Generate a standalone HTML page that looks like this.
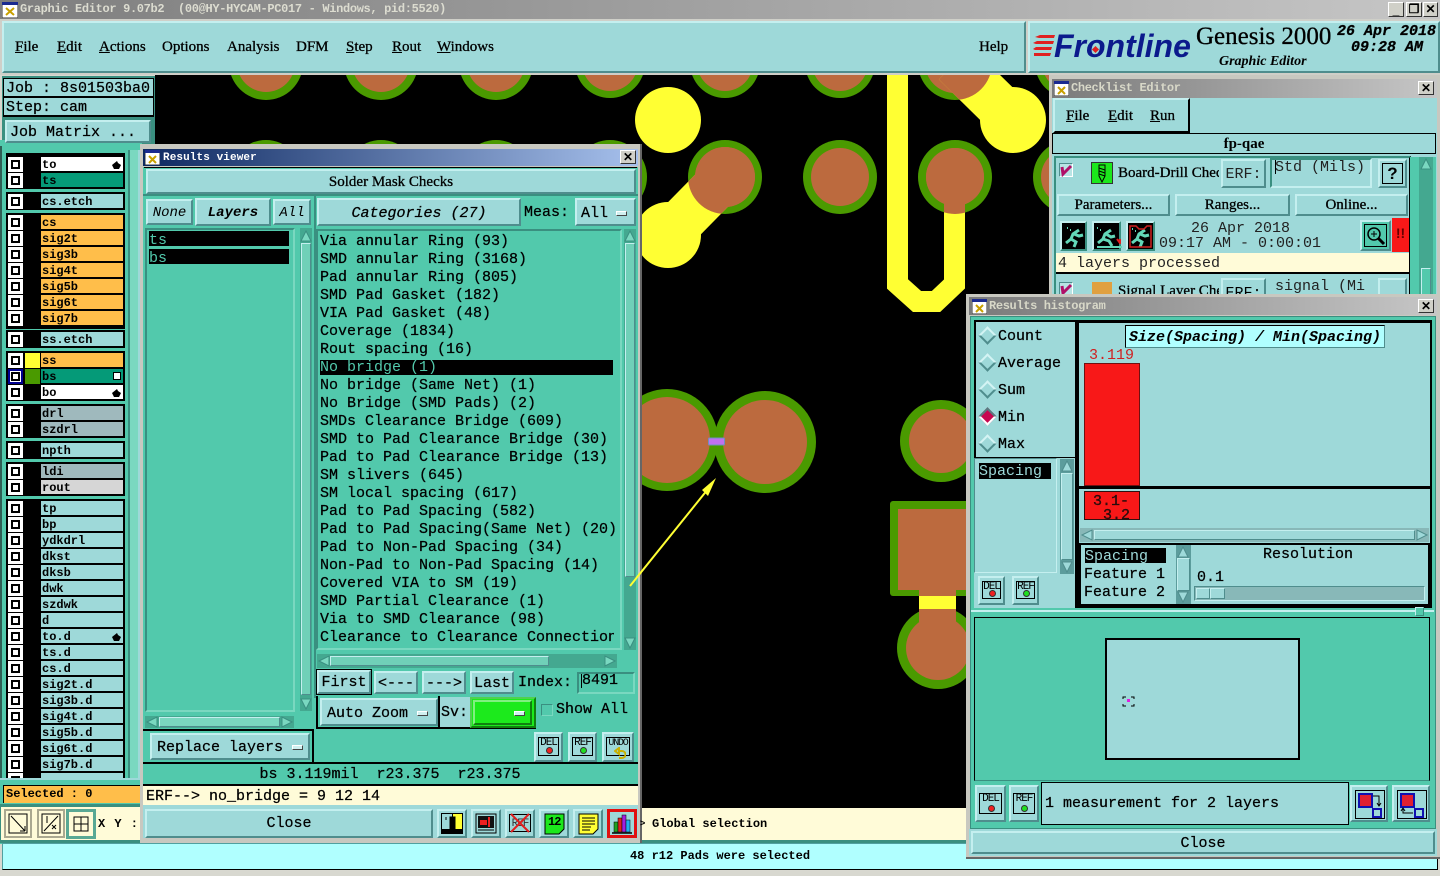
<!DOCTYPE html>
<html><head><meta charset="utf-8"><style>
html,body{margin:0;padding:0;background:#d8d8d0;width:1440px;height:876px;overflow:hidden}
div,span{box-sizing:border-box}
.a{position:absolute}
.m,.s,.l{position:absolute;white-space:pre}
.m{font:15px/18px "Liberation Mono",monospace;color:#000;-webkit-text-stroke:.25px #000;margin-top:2px}
.s{font:15px/18px "Liberation Serif",serif;color:#000;-webkit-text-stroke:.3px #000;margin-top:1px}
.b{position:absolute;background:#9ed9d9;border:2px solid;border-color:#c4efef #4f8d8d #4f8d8d #c4efef;text-align:center;white-space:pre;font:15px/22px "Liberation Mono",monospace;-webkit-text-stroke:.25px #000;padding-top:1px}
.g{position:absolute;background:#52c9ac}
.k{position:absolute;background:#000}
.t{position:absolute;background:#9ed9d9}
.sb{position:absolute;background:#9ed9d9;border:1px solid;border-color:#c4efef #4f8d8d #4f8d8d #c4efef}
.tr{position:absolute;background:#44a890}
.ttl{position:absolute;font:bold 12px/14px "Liberation Mono",monospace;white-space:pre;letter-spacing:-.25px}
.cb{position:absolute;left:8px;width:15px;height:15px;background:#fff}
.cb:after{content:"";box-sizing:border-box;position:absolute;left:3px;top:3px;width:9px;height:9px;border:2px solid #000;background:#fff}
.ly{position:absolute;left:41px;width:82px;height:14px;background:#9ed9d9;font:bold 12px/16px "Liberation Mono",monospace;color:#000;padding-left:1px;white-space:pre;overflow:hidden}
.o{background:#ffbe4a}.w{background:#fff}.e{background:#059a78}.h{background:#9fb9bd}.c{background:#d6d6d6}
.x{position:absolute;width:16px;height:14px;background:#d0d0c8;border:1px solid;border-color:#fff #333 #333 #fff;font:bold 12px/12px "Liberation Sans",sans-serif;text-align:center}
.ic{position:absolute;background:#9ed9d9;border:2px solid;border-color:#c4efef #4f8d8d #4f8d8d #c4efef}
.dl{position:absolute;left:2px;top:3px;right:2px;bottom:4px;border:1px solid #000;font:11px/11px "Liberation Mono",monospace;text-align:center;color:#000;letter-spacing:-1px;white-space:pre}
.dot{position:absolute;width:7px;height:7px;border-radius:50%;border:1px solid #333;left:50%;margin-left:-3px;bottom:1px}
.d{position:absolute;left:981px;width:13px;height:13px;transform:rotate(45deg);border:2px solid;border-color:#d4f4f4 #4f8d8d #4f8d8d #d4f4f4;background:#9ed9d9}
</style></head><body>

<!-- PCB canvas -->
<div class="k" style="left:155px;top:75px;width:900px;height:770px"></div>
<svg class="a" style="left:0;top:0" width="1440" height="876" viewBox="0 0 1440 876">
<defs>
<clipPath id="p1"><circle cx="725" cy="177" r="37"/></clipPath>
<clipPath id="p2"><circle cx="955" cy="177" r="37"/></clipPath>
<clipPath id="p3"><circle cx="955" cy="63" r="37"/></clipPath>
<clipPath id="cv"><rect x="155" y="75" width="900" height="770"/></clipPath>
</defs>
<g clip-path="url(#cv)">
<g fill="#4a9a00">
<circle cx="266" cy="63" r="37"/><circle cx="381" cy="63" r="37"/><circle cx="496" cy="63" r="37"/><circle cx="610" cy="63" r="35"/>
<circle cx="725" cy="63" r="35"/><circle cx="840" cy="63" r="35"/><circle cx="955" cy="63" r="37"/><circle cx="1070" cy="63" r="35"/>
<circle cx="266" cy="177" r="37"/><circle cx="381" cy="177" r="37"/><circle cx="496" cy="177" r="37"/><circle cx="610" cy="177" r="37"/>
<circle cx="725" cy="177" r="37"/><circle cx="840" cy="177" r="37"/><circle cx="955" cy="177" r="37"/><circle cx="1070" cy="177" r="37"/>
<circle cx="667" cy="440" r="51"/><circle cx="765" cy="442" r="51"/><circle cx="941" cy="441" r="41"/><circle cx="938" cy="648" r="41"/>
</g>
<g fill="#bc6a3e">
<circle cx="266" cy="63" r="29"/><circle cx="381" cy="63" r="29"/><circle cx="496" cy="63" r="29"/><circle cx="610" cy="63" r="28"/>
<circle cx="725" cy="63" r="28"/><circle cx="840" cy="63" r="28"/><circle cx="955" cy="63" r="30"/><circle cx="1070" cy="63" r="28"/>
<circle cx="725" cy="177" r="30"/><circle cx="840" cy="177" r="29"/><circle cx="955" cy="177" r="29"/><circle cx="1070" cy="177" r="29"/>
<circle cx="667" cy="440" r="43"/><circle cx="765" cy="442" r="42"/><circle cx="941" cy="441" r="32"/><circle cx="938" cy="648" r="32"/>
</g>
<g fill="#ffff33">
<circle cx="668" cy="120" r="33"/><circle cx="1013" cy="120" r="33"/><circle cx="668" cy="235" r="33"/>
<rect x="919" y="596" width="37" height="14"/>
</g>
<path d="M725 177L668 235" stroke="#ffff33" stroke-width="46" fill="none"/>
<path d="M955 63L1013 120" stroke="#ffff33" stroke-width="46" fill="none"/>
<path d="M725 177L668 235" stroke="#bc6a3e" stroke-width="46" fill="none" clip-path="url(#p1)"/>
<path d="M955 63L1013 120" stroke="#bc6a3e" stroke-width="46" fill="none" clip-path="url(#p3)"/>
<path d="M897.5 70V284L917 301.5H936L954.5 284V177" stroke="#ffff33" stroke-width="21" fill="none"/>
<path d="M954.5 177V220" stroke="#bc6a3e" stroke-width="21" fill="none" clip-path="url(#p2)"/>
<circle cx="955" cy="177" r="29" fill="#bc6a3e"/>
<circle cx="725" cy="177" r="30" fill="#bc6a3e"/>
<rect x="890" y="501" width="90" height="95" rx="3" fill="#4a9a00"/>
<rect x="898" y="509" width="80" height="81" fill="#bc6a3e"/>
<rect x="919" y="590" width="37" height="6" fill="#bc6a3e"/>
<rect x="919" y="596" width="37" height="13" fill="#ffff33"/>
<rect x="919" y="609" width="37" height="15" fill="#bc6a3e"/>
<rect x="708.5" y="438" width="16" height="7" rx="1" fill="#c070f0" stroke="#6f90c0"/>
</g>
</svg>

<!-- Title bar -->
<div class="a" style="left:0;top:0;width:1440px;height:19px;background:linear-gradient(90deg,#7e7e7e,#c6c6c6)"></div>
<svg class="a" style="left:2px;top:2px" width="16" height="16"><rect width="16" height="16" fill="#fff" stroke="#333"/><rect x="0" y="0" width="16" height="3" fill="#1a2a90"/><path d="M4 6l8 7M12 6l-8 7" stroke="#c8a000" stroke-width="2"/></svg>
<div class="ttl" style="left:20px;top:2px;color:#dcdcd0;font-size:12px;letter-spacing:-.33px">Graphic Editor 9.07b2  (00@HY-HYCAM-PC017 - Windows, pid:5520)</div>
<div class="x" style="left:1388px;top:2px;width:16px;height:15px;line-height:14px">_</div>
<div class="x" style="left:1406px;top:2px;width:16px;height:15px;line-height:13px;font-size:12px">&#10064;</div>
<div class="x" style="left:1423px;top:2px;width:15px;height:15px;line-height:13px">&#10005;</div>

<!-- Menu bar -->
<div class="a" style="left:0;top:19px;width:1440px;height:56px;background:#cfcfc8"></div>
<div class="t" style="left:2px;top:21px;width:1024px;height:52px;border:2px solid;border-color:#c4efef #4f8d8d #4f8d8d #c4efef"></div>
<div class="s" style="left:15px;top:37px"><u>F</u>ile</div>
<div class="s" style="left:57px;top:37px"><u>E</u>dit</div>
<div class="s" style="left:99px;top:37px"><u>A</u>ctions</div>
<div class="s" style="left:162px;top:37px">Options</div>
<div class="s" style="left:227px;top:37px">Analysis</div>
<div class="s" style="left:296px;top:37px">DFM</div>
<div class="s" style="left:346px;top:37px"><u>S</u>tep</div>
<div class="s" style="left:392px;top:37px"><u>R</u>out</div>
<div class="s" style="left:437px;top:37px"><u>W</u>indows</div>
<div class="s" style="left:979px;top:37px">Help</div>

<!-- Frontline panel -->
<div class="t" style="left:1028px;top:21px;width:412px;height:52px;border:2px solid;border-color:#c4efef #4f8d8d #4f8d8d #c4efef"></div>
<svg class="a" style="left:1033px;top:34px" width="24" height="24"><g fill="#e02020"><path d="M7 1h15l-1 3H6l-4-1zM4 7h17l-1 3H3l-3-1zM3 13h16l-1 3H2l-2-1zM1 19h17l-1 3H1z"/></g></svg>
<div class="a" style="left:1054px;top:27px;font:italic bold 32px/38px 'Liberation Sans',sans-serif;color:#0b1a8c;white-space:pre">Frontline</div>
<div class="a" style="left:1093px;top:47px;width:5px;height:5px;background:#e02020;transform:rotate(45deg)"></div>
<div class="s" style="left:1196px;top:20px;font-size:25px;line-height:32px">Genesis 2000</div>
<div class="s" style="left:1219px;top:52px;font:italic bold 14px/18px 'Liberation Serif',serif;-webkit-text-stroke:0">Graphic Editor</div>
<div class="m" style="left:1337px;top:21px;font:italic bold 15px/18px 'Liberation Mono',monospace;letter-spacing:0">26 Apr 2018</div>
<div class="m" style="left:1351px;top:37px;font:italic bold 15px/18px 'Liberation Mono',monospace">09:28 AM</div>

<!-- Left panel -->
<div class="a" style="left:2px;top:76px;width:153px;height:70px;background:#3a8f80"></div>
<div class="a" style="left:0;top:140px;width:142px;height:704px;background:#52c9ac"></div>
<div class="a" style="left:0;top:146px;width:2px;height:632px;background:#2f5f55"></div>
<div class="k" style="left:3px;top:78px;width:151px;height:39px"></div>
<div class="t" style="left:4px;top:79px;width:149px;height:17px"></div>
<div class="t" style="left:4px;top:98px;width:149px;height:17px"></div>
<div class="m" style="left:6px;top:78px">Job : 8s01503ba0</div>
<div class="m" style="left:6px;top:97px">Step: cam</div>
<div class="b" style="left:5px;top:120px;width:146px;height:23px;text-align:left;padding-left:3px;line-height:20px">Job Matrix ...</div>

<div class="a" style="left:128px;top:150px;width:12px;height:635px;background:#7ad8c0;border-left:2px solid #3a8f80;border-right:2px solid #9ed9d9"></div>
<div class="k" style="left:6px;top:153px;width:119px;height:36px"></div>
<div class="k" style="left:6px;top:192px;width:119px;height:18px"></div>
<div class="k" style="left:6px;top:213px;width:119px;height:116px"></div>
<div class="k" style="left:6px;top:330px;width:119px;height:18px"></div>
<div class="k" style="left:6px;top:351px;width:119px;height:50px"></div>
<div class="k" style="left:6px;top:404px;width:119px;height:34px"></div>
<div class="k" style="left:6px;top:441px;width:119px;height:18px"></div>
<div class="k" style="left:6px;top:462px;width:119px;height:34px"></div>
<div class="k" style="left:6px;top:499px;width:119px;height:279px"></div>

<div class="cb" style="top:157px"></div><div class="ly w" style="top:157px">to<svg class="a" style="right:2px;top:3px" width="9" height="9"><path d="M0 5L5 1 6 3 9 5 7 9H2z"/></svg></div>
<div class="cb" style="top:173px"></div><div class="ly e" style="top:173px">ts</div>
<div class="cb" style="top:194px"></div><div class="ly" style="top:194px">cs.etch</div>
<div class="cb" style="top:215px"></div><div class="ly o" style="top:215px">cs</div>
<div class="cb" style="top:231px"></div><div class="ly o" style="top:231px">sig2t</div>
<div class="cb" style="top:247px"></div><div class="ly o" style="top:247px">sig3b</div>
<div class="cb" style="top:263px"></div><div class="ly o" style="top:263px">sig4t</div>
<div class="cb" style="top:279px"></div><div class="ly o" style="top:279px">sig5b</div>
<div class="cb" style="top:295px"></div><div class="ly o" style="top:295px">sig6t</div>
<div class="cb" style="top:311px"></div><div class="ly o" style="top:311px">sig7b</div>
<div class="cb" style="top:332px"></div><div class="ly" style="top:332px">ss.etch</div>
<div class="cb" style="top:353px"></div><div class="a" style="left:25px;top:353px;width:15px;height:15px;background:#ffff33"></div><div class="ly o" style="top:353px">ss</div>
<div class="cb" style="top:369px;outline:2px solid #000090;outline-offset:-2px"></div><div class="a" style="left:25px;top:369px;width:15px;height:15px;background:#4a9a00"></div><div class="ly e" style="top:369px">bs<span class="a" style="right:2px;top:3px;width:8px;height:8px;border:1px solid #000;background:#fff"></span></div>
<div class="cb" style="top:385px"></div><div class="ly w" style="top:385px">bo<svg class="a" style="right:2px;top:3px" width="9" height="9"><path d="M0 5L5 1 6 3 9 5 7 9H2z"/></svg></div>
<div class="cb" style="top:406px"></div><div class="ly h" style="top:406px">drl</div>
<div class="cb" style="top:422px"></div><div class="ly h" style="top:422px">szdrl</div>
<div class="cb" style="top:443px"></div><div class="ly" style="top:443px">npth</div>
<div class="cb" style="top:464px"></div><div class="ly h" style="top:464px">ldi</div>
<div class="cb" style="top:480px"></div><div class="ly c" style="top:480px">rout</div>
<div class="cb" style="top:501px"></div><div class="ly" style="top:501px">tp</div>
<div class="cb" style="top:517px"></div><div class="ly" style="top:517px">bp</div>
<div class="cb" style="top:533px"></div><div class="ly" style="top:533px">ydkdrl</div>
<div class="cb" style="top:549px"></div><div class="ly" style="top:549px">dkst</div>
<div class="cb" style="top:565px"></div><div class="ly" style="top:565px">dksb</div>
<div class="cb" style="top:581px"></div><div class="ly" style="top:581px">dwk</div>
<div class="cb" style="top:597px"></div><div class="ly" style="top:597px">szdwk</div>
<div class="cb" style="top:613px"></div><div class="ly" style="top:613px">d</div>
<div class="cb" style="top:629px"></div><div class="ly" style="top:629px">to.d<svg class="a" style="right:2px;top:3px" width="9" height="9"><path d="M0 5L5 1 6 3 9 5 7 9H2z"/></svg></div>
<div class="cb" style="top:645px"></div><div class="ly" style="top:645px">ts.d</div>
<div class="cb" style="top:661px"></div><div class="ly" style="top:661px">cs.d</div>
<div class="cb" style="top:677px"></div><div class="ly" style="top:677px">sig2t.d</div>
<div class="cb" style="top:693px"></div><div class="ly" style="top:693px">sig3b.d</div>
<div class="cb" style="top:709px"></div><div class="ly" style="top:709px">sig4t.d</div>
<div class="cb" style="top:725px"></div><div class="ly" style="top:725px">sig5b.d</div>
<div class="cb" style="top:741px"></div><div class="ly" style="top:741px">sig6t.d</div>
<div class="cb" style="top:757px"></div><div class="ly" style="top:757px">sig7b.d</div>
<div class="cb" style="top:773px;height:5px;overflow:hidden"></div><div class="ly" style="top:773px;height:5px"></div>

<div class="a" style="left:0;top:778px;width:142px;height:7px;background:#52c9ac;border-top:2px solid #9ed9d9"></div>
<div class="a" style="left:3px;top:785px;width:137px;height:18px;background:#ffbe4a;border-top:1px solid #000;border-left:1px solid #000;font:bold 12px/17px 'Liberation Mono',monospace;padding-left:2px;white-space:pre">Selected : 0</div>
<div class="a" style="left:0;top:804px;width:140px;height:38px;background:#3a8f80"></div>
<div class="a" style="left:1px;top:807px;width:139px;height:33px;background:#fffbd8"></div>
<svg class="a" style="left:4px;top:809px" width="92" height="30">
<rect x="1" y="1" width="26" height="27" fill="#fffbd8" stroke="#aaa890" stroke-width="2"/><rect x="5" y="5" width="18" height="19" fill="none" stroke="#000"/><path d="M7 7l14 15M21 22v-5M21 22h-5" stroke="#000" fill="none"/>
<rect x="34" y="1" width="26" height="27" fill="#fffbd8" stroke="#aaa890" stroke-width="2"/><rect x="38" y="5" width="18" height="19" fill="none" stroke="#000"/><path d="M40 22l14-15M43 7v7M48 20l4-4M48 16l4 4" stroke="#000" fill="none"/>
<rect x="62" y="0" width="30" height="30" fill="#59a894"/><rect x="65" y="3" width="24" height="24" fill="#fffbd8"/><rect x="70" y="8" width="14" height="14" fill="none" stroke="#000"/><path d="M70 15h14M77 8v14" stroke="#000"/>
</svg>
<div class="a" style="left:98px;top:816px;font:bold 12px/16px 'Liberation Mono',monospace;white-space:pre;letter-spacing:1px">X Y :</div>

<!-- Canvas info -->
<div class="a" style="left:640px;top:808px;width:326px;height:32px;background:#fffbd8"></div>
<div class="a" style="left:652px;top:816px;font:bold 12px/16px 'Liberation Mono',monospace;white-space:pre">Global selection</div>

<!-- Status bar -->
<div class="a" style="left:0;top:840px;width:1440px;height:3px;background:#3a8f80"></div>
<div class="a" style="left:2px;top:843px;width:1436px;height:27px;background:#b0ffff;border:1px solid;border-color:#50a0a0 #000 #000 #50a0a0;font:bold 12px/25px 'Liberation Mono',monospace;text-align:center">48 r12 Pads were selected</div>

<!-- Results viewer -->
<div class="a" style="left:140px;top:144px;width:502px;height:699px;background:#c8c8c0;border-right:2px solid #666"></div>
<div class="a" style="left:143px;top:149px;width:495px;height:17px;background:linear-gradient(90deg,#0d2860,#a6c0ec)"></div>
<svg class="a" style="left:145px;top:150px" width="15" height="15"><rect width="15" height="15" fill="#fff" stroke="#333"/><rect width="15" height="3" fill="#1a2a90"/><path d="M4 6l7 7M11 6l-7 7" stroke="#c8a000" stroke-width="2"/></svg>
<div class="ttl" style="left:163px;top:151px;color:#fff;font-size:11px;letter-spacing:.1px">Results viewer</div>
<div class="x" style="left:620px;top:150px">&#10005;</div>
<div class="g" style="left:143px;top:167px;width:495px;height:671px"></div>
<div class="k" style="left:144px;top:167px;width:493px;height:1px"></div>
<div class="b" style="left:146px;top:169px;width:490px;height:25px;font:15px/21px 'Liberation Serif',serif;-webkit-text-stroke:.3px #000">Solder Mask Checks</div>
<div class="a" style="left:143px;top:194px;width:495px;height:2px;background:#3a8f80"></div>

<!-- layers col -->
<div class="b" style="left:146px;top:199px;width:47px;height:26px;font:italic 14px/22px 'Liberation Mono',monospace;-webkit-text-stroke:0">None</div>
<div class="b" style="left:195px;top:198px;width:76px;height:28px;font:italic bold 14px/24px 'Liberation Mono',monospace;-webkit-text-stroke:0">Layers</div>
<div class="b" style="left:273px;top:199px;width:38px;height:26px;font:italic 14px/22px 'Liberation Mono',monospace;-webkit-text-stroke:0">All</div>
<div class="g" style="left:145px;top:228px;width:150px;height:484px;border:2px solid;border-color:#3a8f80 #7ad8c0 #7ad8c0 #3a8f80"></div>
<div class="k" style="left:149px;top:231px;width:140px;height:15px"></div>
<div class="k" style="left:149px;top:249px;width:140px;height:15px"></div>
<div class="m" style="left:149px;top:230px;color:#52c9ac;-webkit-text-stroke:0">ts</div>
<div class="m" style="left:149px;top:248px;color:#52c9ac;-webkit-text-stroke:0">bs</div>
<div class="tr" style="left:300px;top:228px;width:12px;height:483px"></div>
<div class="sb" style="left:301px;top:243px;width:10px;height:452px;background:#70d0b8"></div>
<svg class="a" style="left:300px;top:229px" width="12" height="482"><path d="M6 2L11 12H1z" fill="#7ad8c0" stroke="#3a8f80"/><path d="M6 480L11 470H1z" fill="#7ad8c0" stroke="#3a8f80"/></svg>
<div class="tr" style="left:145px;top:716px;width:149px;height:12px"></div>
<div class="sb" style="left:159px;top:717px;width:121px;height:10px;background:#7ad8c0"></div>
<svg class="a" style="left:145px;top:716px" width="149" height="12"><path d="M2 6L12 1V11z" fill="#7ad8c0" stroke="#3a8f80"/><path d="M147 6L137 1V11z" fill="#7ad8c0" stroke="#3a8f80"/></svg>
<div class="k" style="left:143px;top:729px;width:171px;height:2px"></div>
<div class="k" style="left:312px;top:729px;width:2px;height:34px"></div>
<div class="b" style="left:150px;top:733px;width:160px;height:27px;text-align:left;padding-left:5px;line-height:23px">Replace layers</div>
<div class="a" style="left:292px;top:745px;width:11px;height:5px;background:#d0f0f0;border:1px solid;border-color:#fff #444 #444 #fff"></div>
<div class="k" style="left:314px;top:195px;width:2px;height:503px;background:#3a8f80"></div>

<!-- categories -->
<div class="b" style="left:317px;top:198px;width:204px;height:28px;font:italic 15px/25px 'Liberation Mono',monospace">Categories (27)</div>
<div class="m" style="left:524px;top:202px">Meas:</div>
<div class="b" style="left:575px;top:198px;width:61px;height:28px;text-align:left;padding-left:4px;line-height:25px">All</div>
<div class="a" style="left:616px;top:211px;width:11px;height:5px;background:#d0f0f0;border:1px solid;border-color:#fff #444 #444 #fff"></div>
<div class="g" style="left:316px;top:229px;width:306px;height:421px;border:2px solid;border-color:#3a8f80 #7ad8c0 #7ad8c0 #3a8f80"></div>
<div class="k" style="left:320px;top:360px;width:293px;height:15px"></div>
<div class="m" style="left:320px;top:231px">Via annular Ring (93)</div>
<div class="m" style="left:320px;top:249px">SMD annular Ring (3168)</div>
<div class="m" style="left:320px;top:267px">Pad annular Ring (805)</div>
<div class="m" style="left:320px;top:285px">SMD Pad Gasket (182)</div>
<div class="m" style="left:320px;top:303px">VIA Pad Gasket (48)</div>
<div class="m" style="left:320px;top:321px">Coverage (1834)</div>
<div class="m" style="left:320px;top:339px">Rout spacing (16)</div>
<div class="m" style="left:320px;top:357px;color:#52c9ac;-webkit-text-stroke:0">No bridge (1)</div>
<div class="m" style="left:320px;top:375px">No bridge (Same Net) (1)</div>
<div class="m" style="left:320px;top:393px">No Bridge (SMD Pads) (2)</div>
<div class="m" style="left:320px;top:411px">SMDs Clearance Bridge (609)</div>
<div class="m" style="left:320px;top:429px">SMD to Pad Clearance Bridge (30)</div>
<div class="m" style="left:320px;top:447px">Pad to Pad Clearance Bridge (13)</div>
<div class="m" style="left:320px;top:465px">SM slivers (645)</div>
<div class="m" style="left:320px;top:483px">SM local spacing (617)</div>
<div class="m" style="left:320px;top:501px">Pad to Pad Spacing (582)</div>
<div class="m" style="left:320px;top:519px;width:295px;overflow:hidden">Pad to Pad Spacing(Same Net) (20)</div>
<div class="m" style="left:320px;top:537px">Pad to Non-Pad Spacing (34)</div>
<div class="m" style="left:320px;top:555px">Non-Pad to Non-Pad Spacing (14)</div>
<div class="m" style="left:320px;top:573px">Covered VIA to SM (19)</div>
<div class="m" style="left:320px;top:591px">SMD Partial Clearance (1)</div>
<div class="m" style="left:320px;top:609px">Via to SMD Clearance (98)</div>
<div class="m" style="width:294px;overflow:hidden;left:320px;top:627px">Clearance to Clearance Connection</div>
<div class="tr" style="left:624px;top:229px;width:12px;height:421px"></div>
<div class="sb" style="left:625px;top:243px;width:10px;height:334px;background:#70d0b8"></div>
<svg class="a" style="left:624px;top:229px" width="12" height="421"><path d="M6 2L11 12H1z" fill="#7ad8c0" stroke="#3a8f80"/><path d="M6 419L11 409H1z" fill="#7ad8c0" stroke="#3a8f80"/></svg>
<div class="tr" style="left:317px;top:654px;width:300px;height:14px"></div>
<div class="sb" style="left:330px;top:656px;width:219px;height:10px;background:#70d0b8"></div>
<svg class="a" style="left:317px;top:654px" width="300" height="14"><path d="M2 7L12 2V12z" fill="#7ad8c0" stroke="#3a8f80"/><path d="M298 7L288 2V12z" fill="#7ad8c0" stroke="#3a8f80"/></svg>
<div class="k" style="left:316px;top:669px;width:56px;height:26px"></div>
<div class="b" style="left:317px;top:670px;width:54px;height:24px;line-height:20px">First</div>
<div class="b" style="left:374px;top:671px;width:44px;height:23px;line-height:19px">&lt;---</div>
<div class="b" style="left:422px;top:671px;width:44px;height:23px;line-height:19px">---&gt;</div>
<div class="b" style="left:470px;top:671px;width:44px;height:23px;line-height:19px">Last</div>
<div class="m" style="left:518px;top:672px">Index:</div>
<div class="a" style="left:577px;top:672px;width:58px;height:22px;background:#52c9ac;border:2px solid;border-color:#3a8f80 #7ad8c0 #7ad8c0 #3a8f80"></div>
<div class="m" style="left:582px;top:670px">8491</div>
<div class="k" style="left:581px;top:674px;width:1px;height:14px"></div>
<div class="k" style="left:316px;top:696px;width:2px;height:32px"></div>
<div class="k" style="left:316px;top:727px;width:220px;height:2px"></div>
<div class="b" style="left:320px;top:698px;width:118px;height:28px;text-align:left;padding-left:5px;line-height:25px">Auto Zoom</div>
<div class="a" style="left:417px;top:711px;width:11px;height:5px;background:#d0f0f0;border:1px solid;border-color:#fff #444 #444 #fff"></div>
<div class="k" style="left:438px;top:696px;width:2px;height:32px"></div>
<div class="t" style="left:440px;top:697px;width:30px;height:30px"></div>
<div class="m" style="left:441px;top:702px">Sv:</div>
<div class="a" style="left:470px;top:697px;width:66px;height:31px;background:#1cea1c;border:2px solid;border-color:#50d050 #108010 #108010 #50d050"></div>
<div class="a" style="left:473px;top:700px;width:59px;height:25px;border:2px solid;border-color:#80f080 #108010 #108010 #80f080"></div>
<div class="a" style="left:514px;top:711px;width:11px;height:5px;background:#d0f0f0;border:1px solid;border-color:#fff #444 #444 #fff"></div>
<div class="a" style="left:541px;top:704px;width:12px;height:12px;background:#52c9ac;border:1px solid;border-color:#3a8f80 #7ad8c0 #7ad8c0 #3a8f80"></div>
<div class="m" style="left:556px;top:699px">Show All</div>

<div class="ic" style="left:534px;top:732px;width:29px;height:30px"><div class="dl">DEL<span class="dot" style="background:#f02020"></span></div></div>
<div class="ic" style="left:568px;top:732px;width:29px;height:30px"><div class="dl">REF<span class="dot" style="background:#20e020"></span></div></div>
<div class="ic" style="left:602px;top:732px;width:32px;height:30px"><div class="dl" style="font-size:10px;letter-spacing:-1.2px">UNDO<svg class="a" style="left:7px;top:9px" width="12" height="13"><path d="M1 4l4-3v6zM4 4h4a3 3 0 0 1 0 7H5" fill="none" stroke="#c8b000" stroke-width="2"/></svg></div></div>

<div class="k" style="left:143px;top:762px;width:495px;height:2px"></div>
<div class="m" style="left:144px;width:492px;top:764px;text-align:center">bs 3.119mil  r23.375  r23.375</div>
<div class="k" style="left:143px;top:784px;width:495px;height:2px"></div>
<div class="a" style="left:143px;top:786px;width:495px;height:19px;background:#fffbd8"></div>
<div class="m" style="left:146px;top:786px">ERF--&gt; no_bridge = 9 12 14</div>
<div class="a" style="left:143px;top:805px;width:495px;height:33px;background:#9ed9d9"></div>
<div class="b" style="left:145px;top:809px;width:288px;height:29px;line-height:24px">Close</div>

<!-- tool icons -->
<div class="ic" style="left:437px;top:809px;width:30px;height:29px"><svg class="a" style="left:2px;top:2px" width="22" height="21"><rect width="22" height="21" fill="#000"/><rect x="1" y="1" width="10" height="15" fill="#9ed9d9"/><rect x="12" y="1" width="9" height="15" fill="#ffff33"/><path d="M9 4h5v13H9zM5 4v3" fill="#000" stroke="#000"/></svg></div>
<div class="ic" style="left:471px;top:809px;width:30px;height:29px"><svg class="a" style="left:2px;top:2px" width="22" height="21"><rect x="1" y="1" width="20" height="19" fill="#9ed9d9" stroke="#000"/><rect x="3" y="3" width="16" height="12" fill="#111"/><rect x="5" y="7" width="7" height="5" fill="#f02020"/><path d="M14 4v10" stroke="#f02020" stroke-width="2"/><path d="M3 17h16" stroke="#000"/></svg></div>
<div class="ic" style="left:505px;top:809px;width:30px;height:29px"><div class="dl" style="font-size:11px;line-height:19px;color:#333">REF</div><svg class="a" style="left:2px;top:2px" width="22" height="21"><path d="M2 1L20 19M20 1L2 19" stroke="#e02020" stroke-width="2"/></svg></div>
<div class="ic" style="left:539px;top:809px;width:30px;height:29px"><svg class="a" style="left:3px;top:2px" width="21" height="22"><path d="M1 1H20V16L15 21H1z" fill="#1ce81c" stroke="#000"/></svg><div class="a" style="left:7px;top:5px;font:bold 12px/12px 'Liberation Mono',monospace;letter-spacing:-1px">12</div></div>
<div class="ic" style="left:573px;top:809px;width:30px;height:29px"><svg class="a" style="left:3px;top:2px" width="21" height="22"><path d="M1 1H20V16L15 21H1z" fill="#ffff33" stroke="#000"/><path d="M4 5H17M4 8H17M4 11H17M4 14H13M4 17H12" stroke="#000"/></svg></div>
<div class="a" style="left:607px;top:809px;width:30px;height:29px;background:#9ed9d9;border:3px solid #e01010"><svg class="a" style="left:1px;top:1px" width="22" height="22"><path d="M1 20H21" stroke="#000" stroke-width="1.5"/><rect x="3" y="9" width="4" height="10" fill="#20a020" stroke="#000" stroke-width=".5"/><rect x="7" y="5" width="4" height="14" fill="#e02020" stroke="#000" stroke-width=".5"/><rect x="11" y="2" width="4" height="17" fill="#a020e0" stroke="#000" stroke-width=".5"/><rect x="15" y="7" width="4" height="12" fill="#20b0f0" stroke="#000" stroke-width=".5"/></svg></div>
<div class="a" style="left:640px;top:818px;font:bold 9px/10px 'Liberation Sans',sans-serif">&gt;</div>

<!-- Checklist editor -->
<div class="a" style="left:1049px;top:75px;width:391px;height:225px;background:#c8c8c0"></div>
<div class="a" style="left:1052px;top:79px;width:385px;height:19px;background:linear-gradient(90deg,#7a7a7a,#c6c6c6)"></div>
<svg class="a" style="left:1054px;top:81px" width="15" height="15"><rect width="15" height="15" fill="#fff" stroke="#333"/><rect width="15" height="3" fill="#1a2a90"/><path d="M4 6l7 7M11 6l-7 7" stroke="#c8a000" stroke-width="2"/></svg>
<div class="ttl" style="left:1071px;top:81px;color:#d8d8c8;font-size:12px;letter-spacing:-.35px">Checklist Editor</div>
<div class="x" style="left:1418px;top:81px">&#10005;</div>
<div class="t" style="left:1052px;top:98px;width:385px;height:202px"></div>
<div class="b" style="left:1053px;top:98px;width:137px;height:35px;border-color:#c4efef #000 #000 #c4efef"></div>
<div class="s" style="left:1066px;top:106px"><u>F</u>ile</div>
<div class="s" style="left:1108px;top:106px"><u>E</u>dit</div>
<div class="s" style="left:1150px;top:106px"><u>R</u>un</div>
<div class="a" style="left:1052px;top:133px;width:384px;height:21px;border:1px solid #000;background:#9ed9d9;font:bold 15px/20px 'Liberation Serif',serif;text-align:center">fp-qae</div>
<div class="a" style="left:1054px;top:156px;width:357px;height:144px;border:2px solid;border-color:#3a8f80 #000 #000 #3a8f80"></div>
<div class="g" style="left:1410px;top:157px;width:26px;height:143px"></div>
<div class="tr" style="left:1419px;top:157px;width:14px;height:143px"></div>
<div class="sb" style="left:1421px;top:268px;width:10px;height:32px;background:#52c9ac"></div>
<svg class="a" style="left:1419px;top:157px" width="14" height="14"><path d="M7 2L12 12H2z" fill="#7ad8c0" stroke="#3a8f80"/></svg>
<div class="a" style="left:1059px;top:163px;width:14px;height:14px;background:#b8e4e4;border:1px solid;border-color:#4f8d8d #fff #fff #4f8d8d"></div>
<svg class="a" style="left:1059px;top:163px" width="14" height="14"><path d="M3 4L4 11 12 3" fill="none" stroke="#b01068" stroke-width="3"/></svg>
<svg class="a" style="left:1091px;top:162px" width="22" height="22"><rect x=".5" y=".5" width="21" height="21" fill="#1ce81c" stroke="#333"/><path d="M8 3H14V14L11 20 8 14z" fill="none" stroke="#000"/><path d="M8 6L14 8M8 9L14 11M8 12L14 14" stroke="#000"/></svg>
<div class="s" style="left:1118px;top:163px;width:101px;overflow:hidden">Board-Drill Check</div>
<div class="b" style="left:1221px;top:159px;width:45px;height:29px;line-height:25px;-webkit-text-stroke:0;color:#222">ERF:</div>
<div class="a" style="left:1270px;top:158px;width:102px;height:30px;border:2px solid;border-color:#3a8f80 #c4efef #c4efef #3a8f80"></div>
<div class="m" style="left:1275px;top:157px;-webkit-text-stroke:0;color:#222">Std (Mils)</div>
<div class="k" style="left:1275px;top:160px;width:1px;height:14px"></div>
<div class="b" style="left:1378px;top:159px;width:29px;height:29px;padding:0"><div class="a" style="left:2px;top:2px;width:21px;height:21px;border:1px solid #000;font:bold 17px/19px 'Liberation Sans',sans-serif;-webkit-text-stroke:0;background:#9ed9d9">?</div></div>
<div class="b" style="left:1057px;top:194px;width:113px;height:22px;font:15px/17px 'Liberation Serif',serif;-webkit-text-stroke:.3px #000">Parameters...</div>
<div class="b" style="left:1175px;top:194px;width:115px;height:22px;font:15px/17px 'Liberation Serif',serif;-webkit-text-stroke:.3px #000">Ranges...</div>
<div class="b" style="left:1295px;top:194px;width:113px;height:22px;font:15px/17px 'Liberation Serif',serif;-webkit-text-stroke:.3px #000">Online...</div>
<div class="ic" style="left:1060px;top:221px;width:27px;height:30px;background:#000;border-color:#c4efef #3a8f80 #3a8f80 #c4efef"></div>
<div class="ic" style="left:1092px;top:221px;width:29px;height:30px;background:#000;border-color:#c4efef #3a8f80 #3a8f80 #c4efef"></div>
<div class="ic" style="left:1126px;top:221px;width:29px;height:30px;background:#000;border-color:#c4efef #3a8f80 #3a8f80 #c4efef"></div>
<svg class="a" style="left:1060px;top:221px" width="100" height="30"><g fill="none" stroke="#63d8b8" stroke-width="3"><path d="M19 9l-6 4-2 5 5 3-2 5M14 13l5 2 4-1M11 18l-5 4"/><path d="M51 9l-6 4-2 5 6 2 3 5M46 13l5 3 4-1M43 18l-5 4"/><path d="M85 9l-6 4-2 5 5 3-2 5M80 13l5 2 4-1M77 18l-5 4"/></g><path d="M7 7h1M10 9h1M37 7h1M40 9h1M72 8h1M75 10h1" stroke="#63d8b8" stroke-width="2"/><path d="M70 5H76L79 8H84L87 5H91V26H70z" fill="none" stroke="#d02020" stroke-width="1.5"/><path d="M37 26H62" stroke="#63d8b8" stroke-width="2"/><path d="M57 18l3 4M60 18v5" stroke="#e02020" stroke-width="2"/></svg>
<div class="m" style="left:1191px;top:218px;color:#222;-webkit-text-stroke:0">26 Apr 2018</div>
<div class="m" style="left:1159px;top:233px;color:#222;-webkit-text-stroke:0">09:17 AM - 0:00:01</div>
<div class="ic" style="left:1360px;top:220px;width:31px;height:31px;background:#52c9ac"><svg class="a" style="left:2px;top:2px" width="23" height="23"><rect x=".5" y=".5" width="22" height="22" fill="none" stroke="#000"/><circle cx="10" cy="10" r="6" fill="none" stroke="#000" stroke-width="1.5"/><path d="M7 10h6M10 7v6" stroke="#000"/><path d="M14 14l6 6" stroke="#000" stroke-width="3"/></svg></div>
<div class="a" style="left:1392px;top:218px;width:17px;height:34px;background:#f81818;font:bold 14px/30px 'Liberation Sans',sans-serif;text-align:center;color:#600">!!</div>
<div class="a" style="left:1056px;top:253px;width:353px;height:19px;background:#fffbd8"></div>
<div class="m" style="left:1058px;top:253px;color:#222;-webkit-text-stroke:0">4 layers processed</div>
<div class="k" style="left:1056px;top:272px;width:353px;height:2px"></div>
<div class="a" style="left:1059px;top:282px;width:14px;height:14px;background:#b8e4e4;border:1px solid;border-color:#4f8d8d #fff #fff #4f8d8d"></div>
<svg class="a" style="left:1059px;top:282px" width="14" height="14"><path d="M3 4L4 11 12 3" fill="none" stroke="#b01068" stroke-width="3"/></svg>
<div class="a" style="left:1092px;top:282px;width:20px;height:14px;background:#e0a040"></div>
<div class="s" style="left:1118px;top:281px;width:101px;height:14px;overflow:hidden">Signal Layer Check</div>
<div class="b" style="left:1221px;top:278px;width:45px;height:22px;line-height:25px;-webkit-text-stroke:0">ERF:</div>
<div class="m" style="left:1275px;top:276px;-webkit-text-stroke:0;color:#222">signal (Mi</div>
<div class="b" style="left:1378px;top:278px;width:29px;height:22px"></div>

<!-- Results histogram -->
<div class="a" style="left:966px;top:294px;width:474px;height:565px;background:#c8c8c0;border-bottom:2px solid #666"></div>
<div class="a" style="left:969px;top:297px;width:468px;height:18px;background:linear-gradient(90deg,#7a7a7a,#c6c6c6)"></div>
<svg class="a" style="left:972px;top:299px" width="15" height="15"><rect width="15" height="15" fill="#fff" stroke="#333"/><rect width="15" height="3" fill="#1a2a90"/><path d="M4 6l7 7M11 6l-7 7" stroke="#c8a000" stroke-width="2"/></svg>
<div class="ttl" style="left:989px;top:299px;color:#d8d8c8;font-size:12px;letter-spacing:-.35px">Results histogram</div>
<div class="x" style="left:1418px;top:299px">&#10005;</div>
<div class="g" style="left:970px;top:316px;width:466px;height:513px;border:1px solid #3a8f80"></div>
<div class="t" style="left:974px;top:320px;width:102px;height:138px;border:2px solid #000;border-right-width:1px;border-bottom-width:1px"></div>
<div class="d" style="top:329px"></div><div class="d" style="top:356px"></div><div class="d" style="top:383px"></div>
<div class="d" style="top:410px;background:#c80850;border-color:#5a7a80 #fff #fff #5a7a80"></div><div class="d" style="top:437px"></div>
<div class="m" style="left:998px;top:326px">Count</div>
<div class="m" style="left:998px;top:353px">Average</div>
<div class="m" style="left:998px;top:380px">Sum</div>
<div class="m" style="left:998px;top:407px">Min</div>
<div class="m" style="left:998px;top:434px">Max</div>
<div class="t" style="left:974px;top:458px;width:102px;height:150px;border-right:1px solid #000"></div>
<div class="a" style="left:974px;top:458px;width:83px;height:115px;border:1px solid;border-color:#4f8d8d #c4efef #c4efef #4f8d8d"></div>
<div class="k" style="left:979px;top:463px;width:72px;height:16px"></div>
<div class="m" style="left:979px;top:461px;color:#9ed9d9;-webkit-text-stroke:0">Spacing</div>
<div class="a" style="left:1060px;top:459px;width:14px;height:115px;background:#5c9c9c"></div>
<div class="sb" style="left:1061px;top:473px;width:12px;height:87px"></div>
<svg class="a" style="left:1060px;top:459px" width="14" height="115"><path d="M7 2L12 12H2z" fill="#9ed9d9" stroke="#4f8d8d"/><path d="M7 113L12 103H2z" fill="#9ed9d9" stroke="#4f8d8d"/></svg>
<div class="ic" style="left:978px;top:576px;width:27px;height:29px"><div class="dl">DEL<span class="dot" style="background:#f02020"></span></div></div>
<div class="ic" style="left:1012px;top:576px;width:27px;height:29px"><div class="dl">REF<span class="dot" style="background:#20e020"></span></div></div>
<div class="k" style="left:1076px;top:320px;width:356px;height:288px"></div>
<div class="t" style="left:1079px;top:323px;width:351px;height:163px"></div>
<div class="t" style="left:1079px;top:489px;width:351px;height:54px"></div>
<div class="a" style="left:1125px;top:325px;width:260px;height:23px;background:#b0ffff;border:1px solid;border-color:#000 #4f8d8d #4f8d8d #000"></div>
<div class="m" style="left:1129px;top:327px;font:italic bold 15px/18px 'Liberation Mono',monospace;-webkit-text-stroke:0">Size(Spacing) / Min(Spacing)</div>
<div class="m" style="left:1089px;top:345px;color:#d02020;-webkit-text-stroke:0">3.119</div>
<div class="a" style="left:1084px;top:363px;width:56px;height:123px;background:#f81818;border:1px solid #701010"></div>
<div class="a" style="left:1084px;top:491px;width:56px;height:29px;background:#f81818;border:1px solid #301010"></div>
<div class="m" style="left:1093px;top:491px;color:#301010">3.1-</div>
<div class="m" style="left:1103px;top:505px;color:#301010;height:14px;overflow:hidden">3.2</div>
<div class="a" style="left:1080px;top:528px;width:349px;height:14px;background:#88b8b8"></div>
<div class="sb" style="left:1094px;top:530px;width:321px;height:10px"></div>
<svg class="a" style="left:1080px;top:528px" width="349" height="14"><path d="M2 7L12 2V12z" fill="#9ed9d9" stroke="#4f8d8d"/><path d="M347 7L337 2V12z" fill="#9ed9d9" stroke="#4f8d8d"/></svg>
<div class="k" style="left:1079px;top:543px;width:352px;height:62px"></div>
<div class="t" style="left:1081px;top:545px;width:95px;height:59px"></div>
<div class="k" style="left:1085px;top:548px;width:81px;height:15px"></div>
<div class="m" style="left:1085px;top:546px;color:#9ed9d9;-webkit-text-stroke:0">Spacing</div>
<div class="m" style="left:1084px;top:564px">Feature 1</div>
<div class="m" style="left:1084px;top:582px">Feature 2</div>
<div class="a" style="left:1176px;top:545px;width:15px;height:59px;background:#5c9c9c"></div>
<div class="sb" style="left:1177px;top:558px;width:13px;height:33px"></div>
<svg class="a" style="left:1176px;top:545px" width="15" height="59"><path d="M7 2L12 12H2z" fill="#9ed9d9" stroke="#4f8d8d"/><path d="M7 57L12 47H2z" fill="#9ed9d9" stroke="#4f8d8d"/></svg>
<div class="t" style="left:1191px;top:545px;width:237px;height:59px"></div>
<div class="m" style="left:1263px;top:544px">Resolution</div>
<div class="m" style="left:1197px;top:567px">0.1</div>
<div class="a" style="left:1194px;top:586px;width:231px;height:15px;background:#88b8b8;border:1px solid;border-color:#4f8d8d #c4efef #c4efef #4f8d8d"></div>
<div class="sb" style="left:1196px;top:588px;width:14px;height:11px"></div>
<div class="sb" style="left:1210px;top:588px;width:15px;height:11px"></div>
<div class="a" style="left:971px;top:610px;width:463px;height:2px;background:#c4efef"></div>
<div class="a" style="left:1415px;top:607px;width:9px;height:9px;background:#52c9ac;border:1px solid;border-color:#c4efef #3a8f80 #3a8f80 #c4efef"></div>
<div class="g" style="left:974px;top:617px;width:456px;height:164px;border:1px solid #000;border-bottom-color:#3a8f80"></div>
<div class="t" style="left:1105px;top:638px;width:195px;height:122px;border:2px solid #000"></div>
<svg class="a" style="left:1121px;top:696px" width="16" height="12"><rect x="6" y="3" width="3" height="3" fill="#e020e0"/><path d="M5 1H2V3M2 8V10H5M10 1H13V3M13 8V10H10" fill="none" stroke="#000"/></svg>
<div class="ic" style="left:975px;top:785px;width:31px;height:37px"><div class="dl" style="top:6px;bottom:6px">DEL<span class="dot" style="background:#f02020"></span></div></div>
<div class="ic" style="left:1009px;top:785px;width:30px;height:37px"><div class="dl" style="top:6px;bottom:6px">REF<span class="dot" style="background:#20e020"></span></div></div>
<div class="a" style="left:1041px;top:782px;width:308px;height:43px;background:#9ed9d9;border:1px solid #000"></div>
<div class="m" style="left:1045px;top:793px">1 measurement for 2 layers</div>
<div class="ic" style="left:1350px;top:785px;width:38px;height:37px"><svg class="a" style="left:3px;top:3px" width="30" height="29"><rect x=".5" y=".5" width="29" height="28" fill="none" stroke="#000"/><rect x="4" y="4" width="13" height="13" fill="#e02030" stroke="#1010b0" stroke-width="2"/><rect x="18" y="19" width="8" height="8" fill="none" stroke="#1010b0" stroke-width="2"/><path d="M18 6h6v10M22 13l2 3 2-3" stroke="#000" fill="none"/></svg></div>
<div class="ic" style="left:1392px;top:785px;width:38px;height:37px"><svg class="a" style="left:3px;top:3px" width="30" height="29"><rect x=".5" y=".5" width="29" height="28" fill="none" stroke="#000"/><rect x="4" y="4" width="13" height="13" fill="#e02030" stroke="#1010b0" stroke-width="2"/><rect x="18" y="19" width="8" height="8" fill="none" stroke="#1010b0" stroke-width="2"/><path d="M6 19v4h10M4 21l2-3 2 3" stroke="#000" fill="none"/></svg></div>
<div class="t" style="left:969px;top:829px;width:468px;height:27px"></div>
<div class="b" style="left:971px;top:831px;width:464px;height:23px;line-height:19px">Close</div>

<!-- Arrow overlay -->
<svg class="a" style="left:0;top:0;pointer-events:none" width="1440" height="876">
<path d="M630 586L708 489" stroke="#ffff33" stroke-width="2" fill="none"/>
<path d="M716 478L702 490 708 496z" fill="#ffff33"/>
</svg>
</body></html>
